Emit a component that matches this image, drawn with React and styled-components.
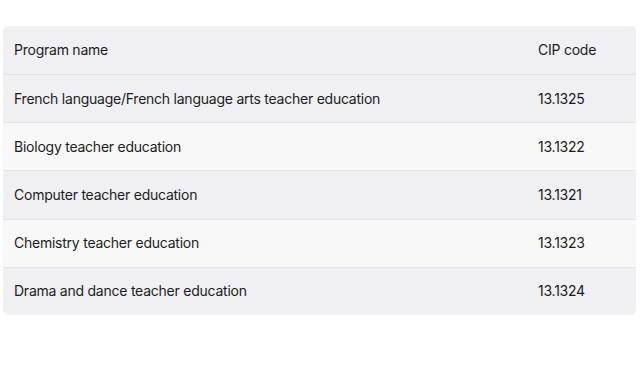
import React from "react";
import styled, { createGlobalStyle } from "styled-components";

const Global = createGlobalStyle`
  html, body { margin: 0; padding: 0; background: #ffffff; }
  body { font-family: Inter, "Noto Sans", sans-serif; color: #1c1c21; }
`;

const Page = styled.div`
  padding: 26px 4px 0 3px;
`;

const Table = styled.div`
  border-radius: 5px;
  overflow: hidden;
  display: grid;
  grid-template-columns: 1fr 109px;
`;

const Row = styled.div`
  display: contents;
  & > div {
    background: ${(p) => (p.$alt ? "#f8f8f9" : "#f0f0f4")};
    border-top: ${(p) => (p.$first ? "none" : "1px solid #e3e3e8")};
  }
`;

const Cell = styled.div`
  box-sizing: border-box;
  height: ${(p) => (p.$first ? "48px" : "48.2px")};
  display: flex;
  align-items: center;
  padding: 0 11px 0 11px;
  font-size: 14px;
  letter-spacing: -0.24px;
  line-height: 20px;
  font-weight: 400;
  white-space: nowrap;
`;

const rows = [
  ["French language/French language arts teacher education", "13.1325"],
  ["Biology teacher education", "13.1322"],
  ["Computer teacher education", "13.1321"],
  ["Chemistry teacher education", "13.1323"],
  ["Drama and dance teacher education", "13.1324"],
];

export default function App() {
  return (
    <>
      <Global />
      <Page>
        <Table>
          <Row $first>
            <Cell $first>Program name</Cell>
            <Cell $first>CIP code</Cell>
          </Row>
          {rows.map(([name, code], i) => (
            <Row key={code} $alt={i % 2 === 1}>
              <Cell>{name}</Cell>
              <Cell>{code}</Cell>
            </Row>
          ))}
        </Table>
      </Page>
    </>
  );
}
